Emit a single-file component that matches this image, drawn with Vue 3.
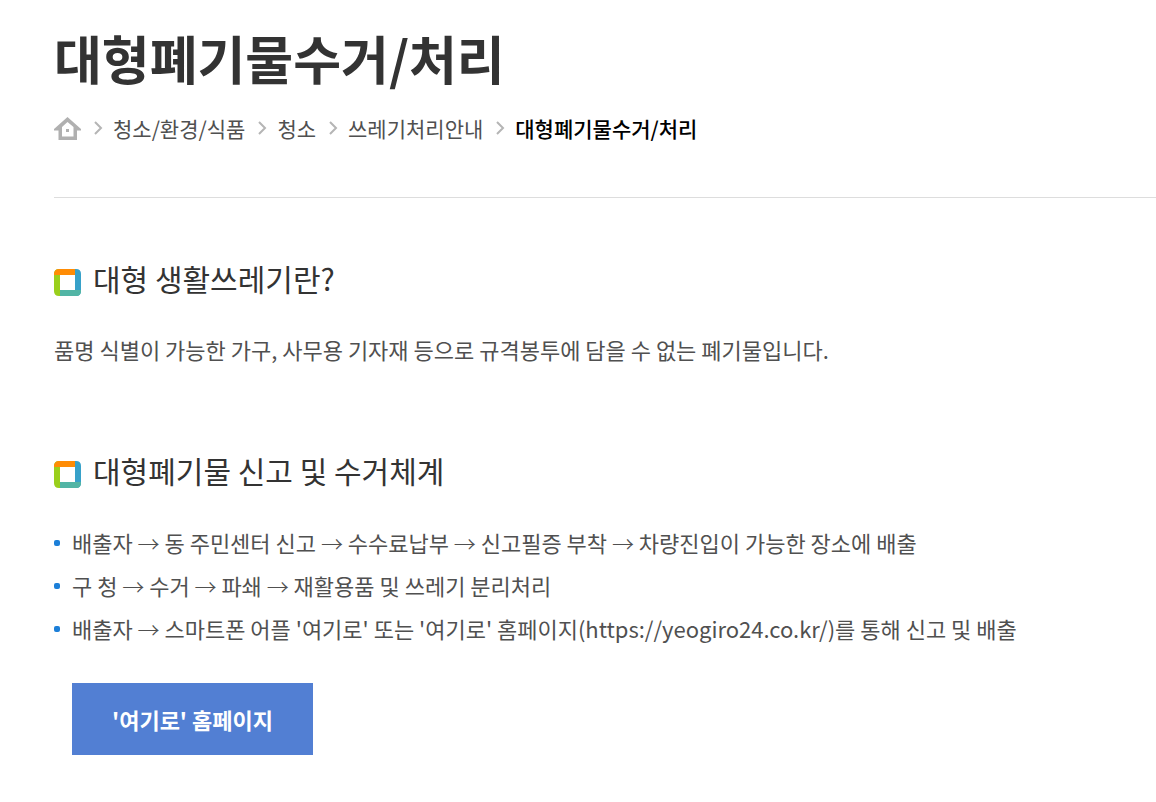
<script setup>
const crumbs = ['청소/환경/식품', '청소', '쓰레기처리안내']
const current = '대형폐기물수거/처리'
const steps = [
  ['배출자', '동 주민센터 신고', '수수료납부', '신고필증 부착', '차량진입이 가능한 장소에 배출'],
  ['구 청', '수거', '파쇄', '재활용품 및 쓰레기 분리처리'],
  ['배출자', "스마트폰 어플 '여기로' 또는 '여기로' 홈페이지(https://yeogiro24.co.kr/)를 통해 신고 및 배출"],
]
const sections = ['대형 생활쓰레기란?', '대형폐기물 신고 및 수거체계']
</script>

<template>
  <main class="page">
    <header class="head">
      <h1>{{ current }}</h1>
      <nav class="crumbs" aria-label="현재 위치">
        <a href="#" class="home" aria-label="홈">
          <svg width="27" height="24" viewBox="0 0 27 24">
            <path d="M13.500 1L27 13V14.500H23V24H4.500V14.500H0V13ZM13.500 6L8 11V20.500H19.500V11Z" fill="#b0b0b0" fill-rule="evenodd" />
            <rect x="12" y="13" width="3" height="3" fill="#b0b0b0" />
          </svg>
        </a>
        <template v-for="c in crumbs" :key="c">
          <svg class="sep" width="9" height="14" viewBox="0 0 9 14"><path d="M1 1L7 7L1 13" /></svg>
          <a href="#">{{ c }}</a>
        </template>
        <svg class="sep" width="9" height="14" viewBox="0 0 9 14"><path d="M1 1L7 7L1 13" /></svg>
        <strong>{{ current }}</strong>
      </nav>
    </header>

    <section v-for="(title, i) in sections" :key="title">
      <h2>
        <svg class="mark" width="27" height="27" viewBox="0 0 27 27" aria-hidden="true">
          <path d="M6 0H5Q0 0 0 5V22Q0 27 5 27H6Z" fill="#9acf1c" />
          <path d="M21 0H22Q27 0 27 5V22Q27 27 22 27H21Z" fill="#37a1c9" />
          <path d="M1 2Q2 0 5 0H21V6H0V5Q0 3 1 2Z" fill="#ff8c05" />
          <path d="M6 21H27V22Q27 27 22 27H6Z" fill="#52b5a5" />
        </svg>
        <span>{{ title }}</span>
      </h2>
      <p v-if="i === 0">품명 식별이 가능한 가구, 사무용 기자재 등으로 규격봉투에 담을 수 없는 폐기물입니다.</p>
      <template v-else>
        <ul>
          <li v-for="(s, n) in steps" :key="n">
            <span><template v-for="(part, k) in s" :key="k"><template v-if="k"><span class="arrow">{{ ' → ' }}</span></template>{{ part }}</template></span>
          </li>
        </ul>
        <a href="https://yeogiro24.co.kr/" class="button">'여기로' 홈페이지</a>
      </template>
    </section>
  </main>
</template>

<style>
body {
  margin: 0;
  background: #fff;
}
</style>

<style scoped>
.page {
  padding: 22px 0 47px 54px;
  font-family: "Noto Sans CJK KR", sans-serif;
  font-size: 22px;
  line-height: 44px;
  color: #505050;
}
.head {
  padding-bottom: 49px;
  border-bottom: 1px solid #ddd;
}
h1 {
  margin: 0;
  font-size: 52px;
  line-height: 72px;
  font-weight: 700;
  color: #333;
}
.crumbs {
  display: flex;
  align-items: center;
  margin-top: 14px;
  font-size: 21px;
  line-height: 40px;
}
.crumbs a {
  color: #505050;
  text-decoration: none;
}
.crumbs strong {
  color: #000;
  font-weight: 500;
}
.home {
  display: flex;
}
.sep {
  margin: 0 10px 0 13px;
  fill: none;
  stroke: #b5b5b5;
  stroke-width: 2;
}
section {
  padding-top: 58px;
}
h2 {
  display: flex;
  align-items: center;
  gap: 12px;
  margin: 0;
  font-size: 30px;
  line-height: 44px;
  font-weight: 400;
  color: #333;
}
.mark {
  margin-top: 8px;
}
p {
  margin: 27px 0 0;
  padding-bottom: 19px;
}
ul {
  margin: 29px 0 0;
  padding: 0;
  list-style: none;
}
li {
  display: flex;
  align-items: center;
  gap: 12px;
  line-height: 43px;
}
li::before {
  content: "";
  flex: none;
  width: 6px;
  height: 6px;
  border-radius: 2px;
  background: #1c7fd8;
}
.arrow {
  font-weight: 300;
  white-space: pre;
}
.button {
  display: inline-block;
  margin: 33px 0 0 18px;
  padding: 14px 40px;
  background: #527fd3;
  color: #fff;
  font-weight: 700;
  text-decoration: none;
}
</style>
